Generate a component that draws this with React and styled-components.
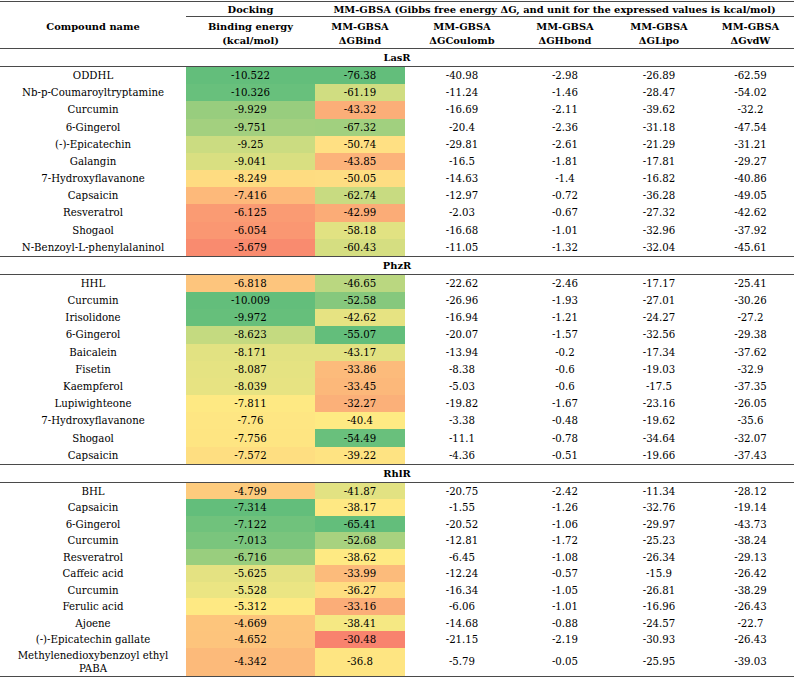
import React from "react";
import styled, { createGlobalStyle } from "styled-components";

const GlobalStyle = createGlobalStyle`
  html, body {
    margin: 0;
    padding: 0;
    background: #fff;
  }
  body {
    font-family: "DejaVu Serif", "Liberation Serif", serif;
    color: #000;
  }
`;

const COLS = "186px 129px 90px 114px 92px 96px 87px";
const LINE = "#4a4a4a";

const Table = styled.div`
  width: 794px;
  margin-top: 1px;
  border-top: 1px solid ${LINE};
  border-bottom: 1px solid ${LINE};
  font-size: 10.2px;
`;

const HeadGrid = styled.div`
  display: grid;
  grid-template-columns: ${COLS};
  grid-template-rows: 15px 31px;
  font-weight: bold;
  font-size: 9.9px;
`;

const NameHead = styled.div`
  grid-row: 1 / span 2;
  grid-column: 1;
  display: flex;
  align-items: center;
  justify-content: center;
  padding-top: 2px;
`;

const SpanHead = styled.div`
  grid-row: 1;
  grid-column: ${(p) => p.$col};
  border-bottom: 1px solid ${LINE};
  display: flex;
  align-items: center;
  justify-content: center;
  white-space: nowrap;
`;

const SubHead = styled.div`
  grid-row: 2;
  text-align: center;
  line-height: 14px;
  padding-top: 3px;
`;

const GroupLabel = styled.div`
  height: 17px;
  border-top: 1px solid ${LINE};
  border-bottom: 1px solid ${LINE};
  display: flex;
  align-items: center;
  justify-content: center;
  font-weight: bold;
  font-size: 9.9px;
`;

const Row = styled.div`
  display: grid;
  grid-template-columns: ${COLS};
  height: ${(p) => p.$h}px;
`;

const Cell = styled.div`
  display: flex;
  align-items: center;
  justify-content: center;
  text-align: center;
  line-height: 13px;
  white-space: nowrap;
  background: ${(p) => p.$bg || "transparent"};
`;

const groups = [
  {
    name: "LasR",
    h: 17.18,
    rows: [
      ["ODDHL", "-10.522", "#63BE7B", "-76.38", "#63BE7B", "-40.98", "-2.98", "-26.89", "-62.59"],
      ["Nb-p-Coumaroyltryptamine", "-10.326", "#68C07C", "-61.19", "#D0DD81", "-11.24", "-1.46", "-28.47", "-54.02"],
      ["Curcumin", "-9.929", "#98CD7E", "-43.32", "#FBAE78", "-16.69", "-2.11", "-39.62", "-32.2"],
      ["6-Gingerol", "-9.751", "#A3D07F", "-67.32", "#A1D07F", "-20.4", "-2.36", "-31.18", "-47.54"],
      ["(-)-Epicatechin", "-9.25", "#CBDC81", "-50.74", "#FFE083", "-29.81", "-2.61", "-21.29", "-31.21"],
      ["Galangin", "-9.041", "#D9DF81", "-43.85", "#FCB37A", "-16.5", "-1.81", "-17.81", "-29.27"],
      ["7-Hydroxyflavanone", "-8.249", "#FEDC81", "-50.05", "#FEDD82", "-14.63", "-1.4", "-16.82", "-40.86"],
      ["Capsaicin", "-7.416", "#FDB97A", "-62.74", "#C8DB81", "-12.97", "-0.72", "-36.28", "-49.05"],
      ["Resveratrol", "-6.125", "#FA9B73", "-42.99", "#FBAC77", "-2.03", "-0.67", "-27.32", "-42.62"],
      ["Shogaol", "-6.054", "#FA9772", "-58.18", "#E1E282", "-16.68", "-1.01", "-32.96", "-37.92"],
      ["N-Benzoyl-L-phenylalaninol", "-5.679", "#F98B6F", "-60.43", "#D5DE81", "-11.05", "-1.32", "-32.04", "-45.61"],
    ],
  },
  {
    name: "PhzR",
    h: 17.18,
    rows: [
      ["HHL", "-6.818", "#FDC57D", "-46.65", "#BAD780", "-22.62", "-2.46", "-17.17", "-25.41"],
      ["Curcumin", "-10.009", "#63BE7B", "-52.58", "#86C87D", "-26.96", "-1.93", "-27.01", "-30.26"],
      ["Irisolidone", "-9.972", "#66BF7B", "-42.62", "#E6E382", "-16.94", "-1.21", "-24.27", "-27.2"],
      ["6-Gingerol", "-8.623", "#C4DA80", "-55.07", "#63BE7B", "-20.07", "-1.57", "-32.56", "-29.38"],
      ["Baicalein", "-8.171", "#E2E282", "-43.17", "#E2E282", "-13.94", "-0.2", "-17.34", "-37.62"],
      ["Fisetin", "-8.087", "#E5E382", "-33.86", "#FCBB7B", "-8.38", "-0.6", "-19.03", "-32.9"],
      ["Kaempferol", "-8.039", "#E7E382", "-33.45", "#FCB87A", "-5.03", "-0.6", "-17.5", "-37.35"],
      ["Lupiwighteone", "-7.811", "#FEE983", "-32.27", "#FBB079", "-19.82", "-1.67", "-23.16", "-26.05"],
      ["7-Hydroxyflavanone", "-7.76", "#FEE683", "-40.4", "#FEEA83", "-3.38", "-0.48", "-19.62", "-35.6"],
      ["Shogaol", "-7.756", "#FEE582", "-54.49", "#69C07C", "-11.1", "-0.78", "-34.64", "-32.07"],
      ["Capsaicin", "-7.572", "#FEDE81", "-39.22", "#FEE382", "-4.36", "-0.51", "-19.66", "-37.43"],
    ],
  },
  {
    name: "RhlR",
    h: 16.5,
    rows: [
      ["BHL", "-4.799", "#FDCB7D", "-41.87", "#E2E282", "-20.75", "-2.42", "-11.34", "-28.12"],
      ["Capsaicin", "-7.314", "#63BE7B", "-38.17", "#FEE883", "-1.55", "-1.26", "-32.76", "-19.14"],
      ["6-Gingerol", "-7.122", "#70C27C", "-65.41", "#63BE7B", "-20.52", "-1.06", "-29.97", "-43.73"],
      ["Curcumin", "-7.013", "#7AC57D", "-52.68", "#A8D27F", "-12.81", "-1.72", "-25.23", "-38.24"],
      ["Resveratrol", "-6.716", "#99CE7E", "-38.62", "#FEEA83", "-6.45", "-1.08", "-26.34", "-29.13"],
      ["Caffeic acid", "-5.625", "#E4E282", "-33.99", "#FCBB7B", "-12.24", "-0.57", "-15.9", "-26.42"],
      ["Curcumin", "-5.528", "#EBE583", "-36.27", "#FEDE81", "-16.34", "-1.05", "-26.81", "-38.29"],
      ["Ferulic acid", "-5.312", "#FEE983", "-33.16", "#FBAD78", "-6.06", "-1.01", "-16.96", "-26.43"],
      ["Ajoene", "-4.669", "#FDC57C", "-38.41", "#F5E883", "-14.68", "-0.88", "-24.57", "-22.7"],
      ["(-)-Epicatechin gallate", "-4.652", "#FDC47C", "-30.48", "#F8836E", "-21.15", "-2.19", "-30.93", "-26.43"],
      ["Methylenedioxybenzoyl ethyl\nPABA", "-4.342", "#FCBA7A", "-36.8", "#FEE582", "-5.79", "-0.05", "-25.95", "-39.03", 28],
    ],
  },
];

const subHeads = [
  ["Binding energy", "(kcal/mol)"],
  ["MM-GBSA", "ΔGBind"],
  ["MM-GBSA", "ΔGCoulomb"],
  ["MM-GBSA", "ΔGHbond"],
  ["MM-GBSA", "ΔGLipo"],
  ["MM-GBSA", "ΔGvdW"],
];

function NameText({ text }) {
  const parts = text.split("\n");
  return (
    <span>
      {parts.map((p, i) => (
        <React.Fragment key={i}>
          {i > 0 && <br />}
          {p}
        </React.Fragment>
      ))}
    </span>
  );
}

export default function App() {
  return (
    <>
      <GlobalStyle />
      <Table>
        <HeadGrid>
          <NameHead>Compound name</NameHead>
          <SpanHead $col="2">Docking</SpanHead>
          <SpanHead $col="3 / span 5">
            MM-GBSA (Gibbs free energy ΔG, and unit for the expressed values is kcal/mol)
          </SpanHead>
          {subHeads.map(([a, b]) => (
            <SubHead key={b}>
              {a}
              <br />
              {b}
            </SubHead>
          ))}
        </HeadGrid>

        {groups.map((g) => (
          <div key={g.name}>
            <GroupLabel>{g.name}</GroupLabel>
            {g.rows.map((r, i) => (
              <Row key={i} $h={r[9] || g.h}>
                <Cell>
                  <NameText text={r[0]} />
                </Cell>
                <Cell $bg={r[2]}>{r[1]}</Cell>
                <Cell $bg={r[4]}>{r[3]}</Cell>
                <Cell>{r[5]}</Cell>
                <Cell>{r[6]}</Cell>
                <Cell>{r[7]}</Cell>
                <Cell>{r[8]}</Cell>
              </Row>
            ))}
          </div>
        ))}
      </Table>
    </>
  );
}
